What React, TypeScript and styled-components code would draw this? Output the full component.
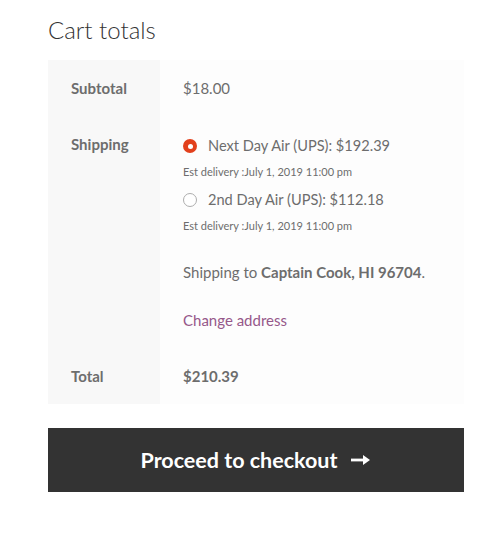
import React from "react";
import styled, { createGlobalStyle } from "styled-components";

const Global = createGlobalStyle`
  html, body { margin: 0; padding: 0; background: #fff; }
  body { font-family: Lato, "Liberation Sans", sans-serif; color: #6d6d6d; -webkit-font-smoothing: antialiased; }
`;

const Wrap = styled.div`
  width: 416px;
  margin-left: 48px;
  padding-top: 14px;
`;

const Title = styled.h2`
  margin: 0 0 14px 0;
  font-weight: 300;
  font-size: 24px;
  line-height: 32px;
  color: #333;
`;

const Table = styled.div`
  display: grid;
  grid-template-columns: 112px 1fr;
`;

const Th = styled.div`
  background: #f8f8f8;
  font-weight: 700;
  font-size: 15px;
  line-height: 26px;
  padding: 15px 0 15px 23px;
  color: #6d6d6d;
`;

const Td = styled.div<{ $bold?: boolean }>`
  background: #fdfdfd;
  font-size: 15px;
  line-height: 26px;
  padding: 15px 0 15px 23px;
  font-weight: ${(p) => (p.$bold ? 700 : 400)};
  color: #6d6d6d;
`;

const ShipCell = styled(Td)`
  padding-top: 17px;
  display: flex;
  flex-direction: column;
`;

const Option = styled.label`
  display: flex;
  align-items: center;
  gap: 11px;
  font-size: 14.6px;
  line-height: 26px;
`;

const Radio = styled.span<{ $checked?: boolean }>`
  width: 14px;
  height: 14px;
  box-sizing: border-box;
  border-radius: 50%;
  flex: none;
  background: ${(p) => (p.$checked ? "#e2401c" : "#fff")};
  border: ${(p) => (p.$checked ? "none" : "1.3px solid #adadad")};
  position: relative;
  &::after {
    content: "";
    display: ${(p) => (p.$checked ? "block" : "none")};
    position: absolute;
    left: 4.5px;
    top: 4.5px;
    width: 5px;
    height: 5px;
    border-radius: 50%;
    background: #fff;
  }
`;

const Est = styled.div`
  font-size: 11px;
  line-height: 26px;
  margin: 0 0 2px 0;
`;

const ShipTo = styled.p`
  margin: 18px 0 0 0;
  font-size: 15px;
  line-height: 26px;
  b { font-weight: 700; }
`;

const Change = styled.a`
  margin-top: 22px;
  font-size: 15px;
  line-height: 26px;
  color: #96588a;
  text-decoration: none;
`;

const Button = styled.button`
  margin-top: 24px;
  width: 416px;
  height: 64px;
  background: #333;
  color: #fff;
  border: none;
  font-family: Lato, "Liberation Sans", sans-serif;
  font-weight: 700;
  font-size: 21.5px;
  display: flex;
  align-items: center;
  justify-content: center;
  gap: 13px;
  cursor: pointer;
`;

export default function App() {
  return (
    <>
      <Global />
      <Wrap>
        <Title>Cart totals</Title>
        <Table>
          <Th>Subtotal</Th>
          <Td>$18.00</Td>
          <Th>Shipping</Th>
          <ShipCell>
            <Option>
              <Radio $checked />
              Next Day Air (UPS): $192.39
            </Option>
            <Est>Est delivery :July 1, 2019 11:00 pm</Est>
            <Option>
              <Radio />
              2nd Day Air (UPS): $112.18
            </Option>
            <Est>Est delivery :July 1, 2019 11:00 pm</Est>
            <ShipTo>
              Shipping to <b>Captain Cook, HI 96704</b>.
            </ShipTo>
            <Change href="#">Change address</Change>
          </ShipCell>
          <Th>Total</Th>
          <Td $bold>$210.39</Td>
        </Table>
        <Button>
          <span>Proceed to checkout</span>
          <svg width="21" height="14" viewBox="0 0 21 14">
            <path d="M1 7h15" stroke="#fff" strokeWidth="2.8" />
            <path d="M13 2l7 5-7 5z" fill="#fff" />
          </svg>
        </Button>
      </Wrap>
    </>
  );
}
